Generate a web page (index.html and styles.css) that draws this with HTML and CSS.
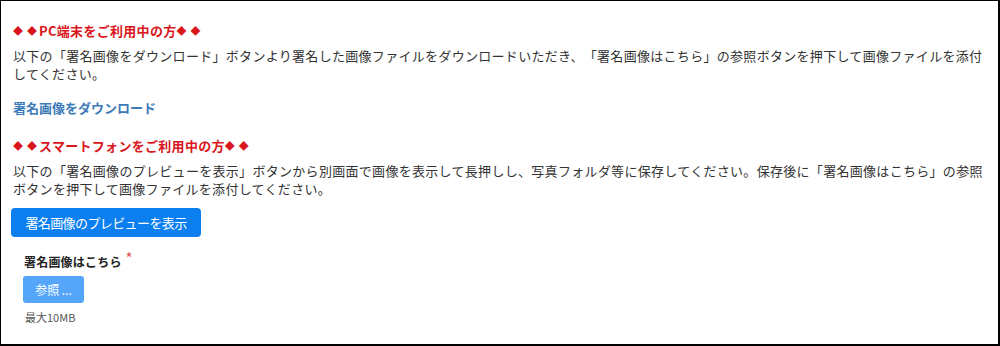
FILE: index.html
```html
<!DOCTYPE html>
<html lang="ja">
<head>
<meta charset="utf-8">
<title>署名画像</title>
<link rel="stylesheet" href="styles.css">
</head>
<body>
<div class="page">
  <h3 class="section-title"><span class="dia">◆</span><span class="dia tight">◆</span>PC端末をご利用中の方<span class="dia">◆</span><span class="dia tight">◆</span></h3>
  <p class="desc">以下の「署名画像をダウンロード」ボタンより署名した画像ファイルをダウンロードいただき、「署名画像はこちら」の参照ボタンを押下して画像ファイルを添付<br>してください。</p>
  <a class="download-link" href="#">署名画像をダウンロード</a>

  <h3 class="section-title second"><span class="dia">◆</span><span class="dia tight">◆</span>スマートフォンをご利用中の方<span class="dia">◆</span><span class="dia tight">◆</span></h3>
  <p class="desc">以下の「署名画像のプレビューを表示」ボタンから別画面で画像を表示して長押しし、写真フォルダ等に保存してください。保存後に「署名画像はこちら」の参照<br>ボタンを押下して画像ファイルを添付してください。</p>
  <button class="btn-preview" type="button">署名画像のプレビューを表示</button>

  <div class="field">
    <div class="field-label">署名画像はこちら<span class="required">*</span></div>
    <button class="btn-browse" type="button">参照 ...</button>
    <div class="field-note">最大10MB</div>
  </div>
</div>
</body>
</html>
```
FILE: styles.css
```css
html, body {
  margin: 0;
  padding: 0;
  background: #fff;
}

.page {
  box-sizing: border-box;
  width: 1000px;
  height: 346px;
  border: 1px solid #000;
  border-right-width: 2px;
  border-bottom-width: 2px;
  padding: 21px 12px 0 12px;
  display: flex;
  flex-direction: column;
  align-items: flex-start;
  font-family: "Noto Sans CJK JP", "Noto Sans", sans-serif;
  color: #333;
  overflow: hidden;
  text-spacing-trim: space-all;
}

.section-title {
  margin: 0;
  font-size: 13px;
  line-height: 18px;
  font-weight: bold;
  color: #d9161c;
  letter-spacing: 0.3px;
}

.dia {
  font-size: 10px;
  line-height: 1;
  letter-spacing: 0;
  margin-right: 4px;
  position: relative;
  top: -1px;
}

.dia.tight {
  margin-right: 2px;
}

.section-title.second {
  margin-top: 20px;
}

.desc {
  margin: 7px 0 0 0;
  font-size: 13px;
  line-height: 18px;
  letter-spacing: 0.3px;
  white-space: nowrap;
}

.download-link {
  margin-top: 16px;
  font-size: 13px;
  line-height: 18px;
  font-weight: bold;
  color: #3d7ab8;
  text-decoration: none;
}

.btn-preview {
  margin: 10px 0 0 -2px;
  width: 190px;
  height: 29px;
  border: none;
  border-radius: 4px;
  background: #0b7ff0;
  color: #fff;
  font-family: inherit;
  font-size: 13px;
  letter-spacing: -0.6px;
  padding: 0;
  cursor: pointer;
}

.field {
  margin: 16px 0 0 11px;
  display: flex;
  flex-direction: column;
  align-items: flex-start;
}

.field-label {
  font-size: 12px;
  line-height: 18px;
  font-weight: bold;
  color: #222;
  letter-spacing: 0.2px;
}

.required {
  color: #e0524f;
  font-weight: normal;
  font-size: 15px;
  line-height: 1;
  margin-left: 4px;
  position: relative;
  top: -3px;
}

.btn-browse {
  margin: 5px 0 0 -1px;
  width: 61px;
  height: 27px;
  border: none;
  border-radius: 3px;
  background: #55a6fb;
  color: #fff;
  font-family: inherit;
  font-size: 12px;
  padding: 0;
}

.field-note {
  margin-top: 7px;
  margin-left: 1px;
  font-size: 11px;
  line-height: 15px;
  color: #555;
}
```
